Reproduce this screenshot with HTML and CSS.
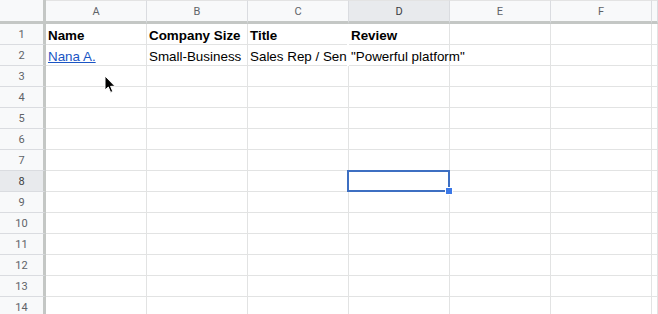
FILE: index.html
```html
<!DOCTYPE html>
<html lang="en">
<head>
    <meta charset="UTF-8">
    <title>Reviews - Sheet</title>
    <link rel="stylesheet" href="styles.css">
</head>
<body>
    <div class="sheet">
        <div class="corner"></div>
        <div class="col-head">A</div><div class="col-head">B</div><div class="col-head">C</div><div class="col-head active">D</div><div class="col-head">E</div><div class="col-head">F</div><div class="col-head last"></div>

        <div class="row-head">1</div>
        <div class="cell bold">Name</div><div class="cell bold">Company Size</div><div class="cell bold clip">Title</div><div class="cell bold">Review</div><div class="cell"></div><div class="cell"></div><div class="cell"></div>

        <div class="row-head">2</div>
        <div class="cell"><a class="link" href="#">Nana A.</a></div><div class="cell">Small-Business</div><div class="cell clip">Sales Rep / Senior Account Executive</div><div class="cell spill">"Powerful platform"</div><div class="cell"></div><div class="cell"></div><div class="cell"></div>

        <div class="row-head">3</div><div class="cell"></div><div class="cell"></div><div class="cell"></div><div class="cell"></div><div class="cell"></div><div class="cell"></div><div class="cell"></div>
        <div class="row-head">4</div><div class="cell"></div><div class="cell"></div><div class="cell"></div><div class="cell"></div><div class="cell"></div><div class="cell"></div><div class="cell"></div>
        <div class="row-head">5</div><div class="cell"></div><div class="cell"></div><div class="cell"></div><div class="cell"></div><div class="cell"></div><div class="cell"></div><div class="cell"></div>
        <div class="row-head">6</div><div class="cell"></div><div class="cell"></div><div class="cell"></div><div class="cell"></div><div class="cell"></div><div class="cell"></div><div class="cell"></div>
        <div class="row-head">7</div><div class="cell"></div><div class="cell"></div><div class="cell"></div><div class="cell"></div><div class="cell"></div><div class="cell"></div><div class="cell"></div>
        <div class="row-head active">8</div><div class="cell"></div><div class="cell"></div><div class="cell"></div><div class="cell selected"></div><div class="cell"></div><div class="cell"></div><div class="cell"></div>
        <div class="row-head">9</div><div class="cell"></div><div class="cell"></div><div class="cell"></div><div class="cell"></div><div class="cell"></div><div class="cell"></div><div class="cell"></div>
        <div class="row-head">10</div><div class="cell"></div><div class="cell"></div><div class="cell"></div><div class="cell"></div><div class="cell"></div><div class="cell"></div><div class="cell"></div>
        <div class="row-head">11</div><div class="cell"></div><div class="cell"></div><div class="cell"></div><div class="cell"></div><div class="cell"></div><div class="cell"></div><div class="cell"></div>
        <div class="row-head">12</div><div class="cell"></div><div class="cell"></div><div class="cell"></div><div class="cell"></div><div class="cell"></div><div class="cell"></div><div class="cell"></div>
        <div class="row-head">13</div><div class="cell"></div><div class="cell"></div><div class="cell"></div><div class="cell"></div><div class="cell"></div><div class="cell"></div><div class="cell"></div>
        <div class="row-head">14</div><div class="cell"></div><div class="cell"></div><div class="cell"></div><div class="cell"></div><div class="cell"></div><div class="cell"></div><div class="cell"></div>
    </div>

    <svg class="pointer" width="12" height="19" viewBox="0 0 12 19">
        <path d="M1 1 L1 15 L4.3 12 L6.6 17.4 L8.8 16.5 L6.6 11.3 L11 11.3 Z" fill="#000" stroke="#fff" stroke-width="1" stroke-linejoin="round"/>
    </svg>
</body>
</html>
```

FILE: styles.css
```css
html, body {
    margin: 0;
    padding: 0;
    background: #fff;
    overflow: hidden;
}
body {
    position: relative;
    width: 658px;
    height: 314px;
}
.sheet {
    display: grid;
    grid-template-columns: 46px repeat(6, 101px) 1fr;
    grid-template-rows: 24px;
    grid-auto-rows: 21px;
    font-family: "Liberation Sans", Arial, sans-serif;
}
.corner, .col-head, .row-head {
    box-sizing: border-box;
    background-color: #f8f9fa;
    color: #5f6368;
    font-family: Roboto, "Liberation Sans", Arial, sans-serif;
    font-size: 11px;
    display: flex;
    align-items: center;
    justify-content: center;
}
.corner {
    border-right: 3px solid #c4c7c5;
    border-bottom: 3px solid #c4c7c5;
}
.col-head {
    border-right: 1px solid #dadce0;
    border-bottom: 3px solid #c4c7c5;
    border-top: 1px solid #e3e3e3;
}
.row-head {
    border-right: 3px solid #c4c7c5;
    border-bottom: 1px solid #dadce0;
    padding-top: 1px;
}
.col-head.active, .row-head.active {
    background-color: #e8eaed;
    color: #3c4043;
}
.cell {
    box-sizing: border-box;
    border-right: 1px solid #e2e3e3;
    border-bottom: 1px solid #e2e3e3;
    font-size: 13.4px;
    color: #000;
    padding: 0 3px 1px 2px;
    display: flex;
    align-items: flex-end;
    white-space: nowrap;
    position: relative;
}
.bold {
    font-weight: bold;
}
.clip {
    overflow: hidden;
    clip-path: inset(0 2px 0 0);
}
.spill {
    overflow: visible;
    z-index: 1;
}
.link {
    color: #1a55c4;
    text-decoration: underline;
}
.selected::after {
    content: "";
    position: absolute;
    top: -1px;
    left: -2px;
    right: -1px;
    bottom: -1px;
    border: 2px solid #3d6fc2;
}
.selected::before {
    content: "";
    position: absolute;
    right: -4px;
    bottom: -4px;
    width: 6px;
    height: 6px;
    background-color: #3b78e7;
    border: 1px solid #fff;
    z-index: 2;
}
.pointer {
    position: absolute;
    left: 104px;
    top: 75px;
}
```
